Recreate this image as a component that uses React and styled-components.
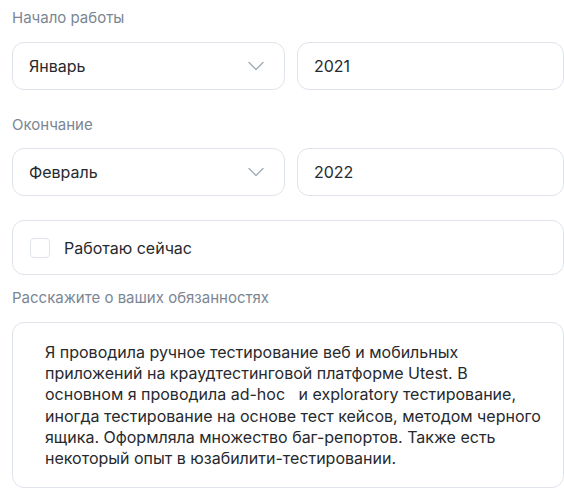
import React, { useState } from 'react'
import styled, { createGlobalStyle } from 'styled-components'

const GlobalStyle = createGlobalStyle`
  body {
    margin: 0;
    background: #ffffff;
    font-family: Inter, "Noto Sans", sans-serif;
  }
`

const Form = styled.div`
  width: 552px;
  padding: 6px 0 0 12px;
`

const Label = styled.div`
  font-size: 15px;
  line-height: 24px;
  color: #7b8693;
  margin-bottom: ${p => p.gap || 12}px;
`

const Row = styled.div`
  display: grid;
  grid-template-columns: 273px 1fr;
  gap: 12px;
  margin-bottom: ${p => p.bottom || 0}px;
`

const Box = styled.div`
  box-sizing: border-box;
  height: 48px;
  border: 1px solid #dfe3ea;
  border-radius: 12px;
  display: flex;
  align-items: center;
  padding: 0 16px;
  font-size: 16px;
  color: #26292d;
  background: #fff;
`

const SelectBox = styled(Box)`
  justify-content: space-between;
  padding-right: 20px;
`

const CheckRow = styled(Box)`
  height: 55px;
  gap: 14px;
  padding-left: 17px;
  margin-bottom: 11px;
`

const Check = styled.span`
  box-sizing: border-box;
  width: 20px;
  height: 20px;
  border: 1px solid #dfe3ea;
  border-radius: 4px;
  background: #fff;
`

const TextArea = styled.div`
  box-sizing: border-box;
  border: 1px solid #dfe3ea;
  border-radius: 12px;
  padding: 19px 20px 18px 32px;
  font-size: 16px;
  line-height: 21.2px;
  color: #26292d;
  height: 166px;
`

const Chevron = () => (
  <svg width="16" height="10" viewBox="0 0 16 10" fill="none">
    <path d="M1 1.5 L8 8.5 L15 1.5" stroke="#a3adb9" strokeWidth="1.4" strokeLinecap="round" strokeLinejoin="round" />
  </svg>
)

const Select = ({ value }) => (
  <SelectBox>
    <span>{value}</span>
    <Chevron />
  </SelectBox>
)

export default function App() {
  const [working] = useState(false)
  return (
    <>
      <GlobalStyle />
      <Form>
        <Label>Начало работы</Label>
        <Row bottom={23}>
          <Select value="Январь" />
          <Box>2021</Box>
        </Row>
        <Label gap={11}>Окончание</Label>
        <Row bottom={24}>
          <Select value="Февраль" />
          <Box>2022</Box>
        </Row>
        <CheckRow>
          <Check aria-checked={working} />
          <span>Работаю сейчас</span>
        </CheckRow>
        <Label>Расскажите о ваших обязанностях</Label>
        <TextArea>
          Я проводила ручное тестирование веб и мобильных<br />
          приложений на краудтестинговой платформе Utest. В<br />
          основном я проводила ad-hoc&nbsp;&nbsp; и exploratory тестирование,<br />
          иногда тестирование на основе тест кейсов, методом черного<br />
          ящика. Оформляла множество баг-репортов. Также есть<br />
          некоторый опыт в юзабилити-тестировании.
        </TextArea>
      </Form>
    </>
  )
}
